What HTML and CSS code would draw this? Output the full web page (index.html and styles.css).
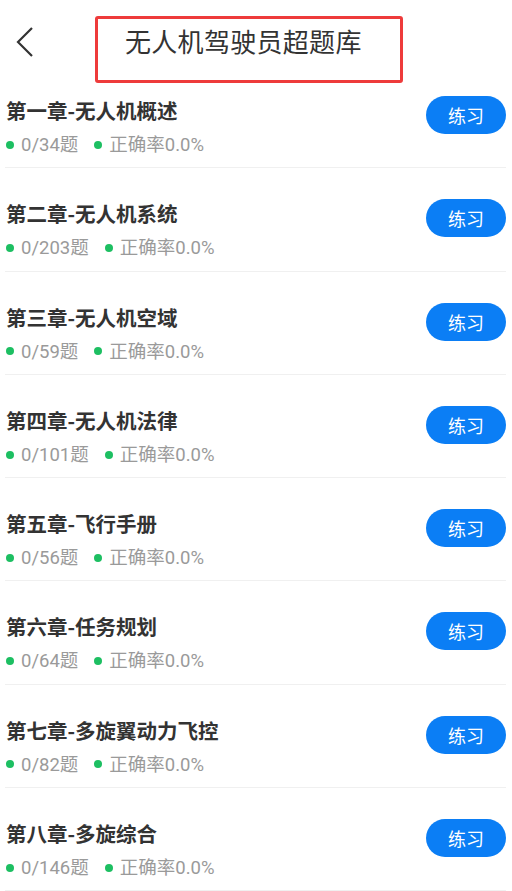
FILE: index.html
```html
<!DOCTYPE html>
<html>
<head>
  <meta charset="utf-8">
  <title>无人机驾驶员超题库</title>
  <link rel="stylesheet" href="styles.css">
</head>
<body>
  <div class="header">
    <span class="back">
      <svg width="18" height="30" viewBox="0 0 18 30"><path d="M16 1 L2 15 L16 29" fill="none" stroke="#333" stroke-width="2.2"/></svg>
    </span>
    <h1 class="title">无人机驾驶员超题库</h1>
    <div class="mark"></div>
  </div>

  <ul class="chapters"></ul>

  <script>
    const chapters = [
      ["第一章-无人机概述", 34],
      ["第二章-无人机系统", 203],
      ["第三章-无人机空域", 59],
      ["第四章-无人机法律", 101],
      ["第五章-飞行手册", 56],
      ["第六章-任务规划", 64],
      ["第七章-多旋翼动力飞控", 82],
      ["第八章-多旋综合", 146]
    ];
    const list = document.querySelector(".chapters");
    chapters.forEach(c => {
      const li = document.createElement("li");
      li.className = "chapter";
      li.innerHTML = `
        <div class="info">
          <div class="name">${c[0]}</div>
          <div class="meta">
            <span class="stat">0/${c[1]}题</span>
            <span class="stat">正确率0.0%</span>
          </div>
        </div>
        <button class="practice">练习</button>
      `;
      list.appendChild(li);
    });
  </script>
</body>
</html>
```

FILE: styles.css
```css
body {
  margin: 0;
  font-family: "Noto Sans CJK SC", "Noto Sans", sans-serif;
  background: #fff;
  color: #333;
}
.header {
  position: relative;
  height: 65px;
  display: flex;
  align-items: flex-start;
}
.back {
  display: flex;
  margin: 27px 0 0 16px;
}
.title {
  margin: 22px 0 0 91px;
  font-size: 26px;
  line-height: 38px;
  font-weight: normal;
  color: #333;
  letter-spacing: 0.3px;
}
.mark {
  position: absolute;
  left: 95px;
  top: 16px;
  width: 302px;
  height: 61px;
  border: 3px solid #ee3b3b;
  border-radius: 3px;
}
.chapters {
  list-style: none;
  margin: 0;
  padding: 0;
}
.chapter {
  display: flex;
  align-items: flex-start;
  justify-content: space-between;
  margin: 0 6px 0 5px;
  padding: 31px 0 10.3px 1px;
  border-bottom: 1px solid #f0f0f0;
}
.name {
  font-size: 20.5px;
  font-weight: bold;
  line-height: 28px;
  color: #333;
}
.meta {
  margin-top: 9px;
  line-height: 24px;
  font-family: Roboto, "Noto Sans CJK SC", sans-serif;
  font-size: 18.5px;
  color: #9a9a9a;
  display: flex;
  gap: 16px;
}
.stat::before {
  content: "";
  display: inline-block;
  width: 8px;
  height: 8px;
  border-radius: 50%;
  background: #1dbf62;
  margin: 0 7px 3px 0;
  vertical-align: middle;
}
.practice {
  width: 80px;
  height: 38px;
  border: none;
  border-radius: 19px;
  background: #0b7ef5;
  color: #fff;
  font-family: inherit;
  font-size: 18px;
  padding: 0;
}
```
